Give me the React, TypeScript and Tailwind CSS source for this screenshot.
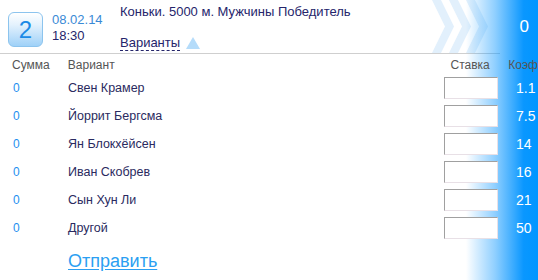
const ROWS = [
  { name: 'Свен Крамер', coef: '1.1' },
  { name: 'Йоррит Бергсма', coef: '7.5' },
  { name: 'Ян Блокхёйсен', coef: '14' },
  { name: 'Иван Скобрев', coef: '16' },
  { name: 'Сын Хун Ли', coef: '21' },
  { name: 'Другой', coef: '50' },
];

function Chevrons() {
  return (
    <svg className="absolute left-[432px] top-0" width="60" height="53" viewBox="0 0 60 53">
      {[0, 17, 34].map((x) => (
        <polygon
          key={x}
          points={`${x},0 ${x + 9},0 ${x + 22},26.5 ${x + 9},53 ${x},53 ${x + 13},26.5`}
          fill="#e2f0fc"
        />
      ))}
    </svg>
  );
}

export default function App() {
  return (
    <div className="relative w-[538px] h-[280px] overflow-hidden bg-white font-['Liberation_Sans',Arial,sans-serif] text-[12px]">
      <Chevrons />
      {/* blue fade on the right */}
      <div className="absolute right-0 top-0 bottom-0 w-[72px] bg-[linear-gradient(to_right,rgba(10,150,255,0)_0%,rgba(10,150,255,0.45)_40%,#0a97ff_80%,#0096ff_100%)]" />

      {/* header */}
      <div className="flex h-[54px] border-b border-[#cfcfcf] w-[500px]">
        <div className="ml-[8px] mt-[12px] w-[35px] h-[35px] shrink-0 rounded-[6px] border border-[#8cc4ee] bg-[linear-gradient(to_bottom,#ffffff_0%,#e4f2fd_35%,#9fd1f8_100%)] flex items-center justify-center text-[24px] leading-none text-[#1b8ae6]">
          2
        </div>
        <div className="ml-[9px] mt-[12px] w-[68px] shrink-0 flex flex-col text-[13px] leading-[16px]">
          <span className="text-[#3a8ad6]">08.02.14</span>
          <span className="text-[#25256b]">18:30</span>
        </div>
        <div className="mt-[4px] flex flex-col">
          <span className="text-[13px] text-[#25256b] leading-[15px]">Коньки. 5000 м. Мужчины Победитель</span>
          <div className="mt-[16px] flex items-center">
            <span className="text-[13px] text-[#25256b] leading-[15px] border-b border-dashed border-[#25256b]">Варианты</span>
            <span className="ml-[6px] w-0 h-0 border-l-[7px] border-r-[7px] border-b-[12px] border-l-transparent border-r-transparent border-b-[#b5dcfa]" />
          </div>
        </div>
      </div>
      <div className="absolute right-[9px] top-[14px] text-[17px] text-white">0</div>

      {/* table */}
      <div className="relative flex flex-col">
        <div className="flex h-[20px] pt-[2px] items-center text-[#555555]">
          <span className="ml-[12px] w-[56px]">Сумма</span>
          <span className="w-[384px]">Вариант</span>
          <span className="w-[58px]">Ставка</span>
          <span className="whitespace-nowrap">Коэф</span>
        </div>
        {ROWS.map((r) => (
          <div key={r.name} className="flex h-[28px] items-center">
            <span className="ml-[13px] w-[55px] text-[#1e8ff0]">0</span>
            <span className="w-[376px] text-[#2a2a60] text-[12.5px]">{r.name}</span>
            <div className="w-[54px] h-[22px] border border-[#a0a0a0] border-r-[#e8e0e6] border-b-[#e8e0e6] bg-white" />
            <span className="ml-[18px] text-[14px] text-white">{r.coef}</span>
          </div>
        ))}
        <div className="ml-[68px] mt-[6px]">
          <span className="text-[18px] text-[#2b9ff2] underline underline-offset-[2px]">Отправить</span>
        </div>
      </div>
    </div>
  );
}
